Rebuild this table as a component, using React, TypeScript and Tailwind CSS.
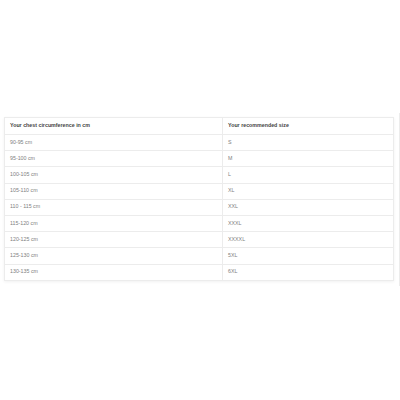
import React from 'react';

const rows = [
  ['90-95 cm', 'S'],
  ['95-100 cm', 'M'],
  ['100-105 cm', 'L'],
  ['105-110 cm', 'XL'],
  ['110 - 115 cm', 'XXL'],
  ['115-120 cm', 'XXXL'],
  ['120-125 cm', 'XXXXL'],
  ['125-130 cm', '5XL'],
  ['130-135 cm', '6XL'],
];

export default function App() {
  return (
    <div className="w-[400px] h-[400px] bg-white" style={{ fontFamily: '"Liberation Sans", Arial, sans-serif' }}>
      <div className="pt-[113px]">
        <div className="w-[400px] h-[173px] border-r border-[#ececec] pt-[4px] pl-[4px]">
          <table className="w-[390px] border-collapse shadow-[0_1px_3px_rgba(0,0,0,0.06)] text-[5.3px]">
            <thead>
              <tr className="h-[17px]">
                <th className="w-[218px] border border-[#ececec] pl-[5px] text-left font-semibold text-[#444]">
                  Your chest circumference in cm
                </th>
                <th className="border border-[#ececec] pl-[5px] text-left font-semibold text-[#444]">
                  Your recommended size
                </th>
              </tr>
            </thead>
            <tbody>
              {rows.map(([cm, size]) => (
                <tr key={cm} className="h-[16.2px]">
                  <td className="border border-[#ececec] pl-[5px] text-[#808080]">{cm}</td>
                  <td className="border border-[#ececec] pl-[5px] text-[#808080]">{size}</td>
                </tr>
              ))}
            </tbody>
          </table>
        </div>
      </div>
    </div>
  );
}
